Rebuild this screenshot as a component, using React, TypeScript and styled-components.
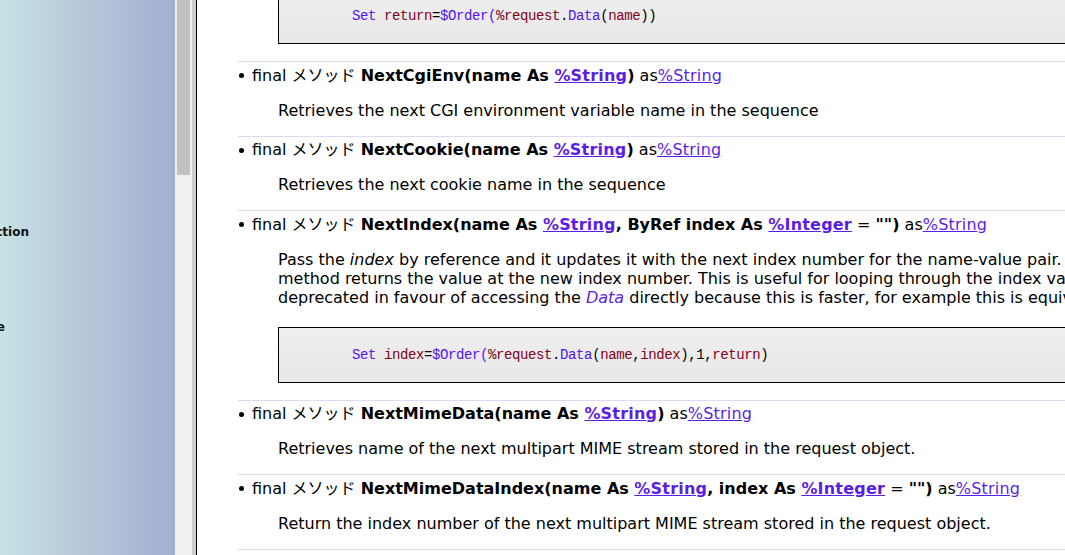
import React from 'react';
import styled, { createGlobalStyle } from 'styled-components';

const GlobalStyle = createGlobalStyle`
  html, body {
    margin: 0;
    padding: 0;
    background: #ffffff;
    overflow: hidden;
  }
  body {
    font-family: 'DejaVu Sans', 'Noto Sans CJK JP', sans-serif;
  }
`;

type Token = { t: string; k?: 'kw' | 'var' };

type Part =
  | { kind: 'text'; text: string }
  | { kind: 'bold'; text: string }
  | { kind: 'link'; text: string; bold?: boolean };

interface Method {
  parts: Part[];
  desc?: string;
}

const cgiEnv: Method = {
  parts: [
    { kind: 'bold', text: 'NextCgiEnv(name As ' },
    { kind: 'link', text: '%String', bold: true },
    { kind: 'bold', text: ')' },
    { kind: 'text', text: ' as' },
    { kind: 'link', text: '%String' },
  ],
  desc: 'Retrieves the next CGI environment variable name in the sequence',
};

const cookie: Method = {
  parts: [
    { kind: 'bold', text: 'NextCookie(name As ' },
    { kind: 'link', text: '%String', bold: true },
    { kind: 'bold', text: ')' },
    { kind: 'text', text: ' as' },
    { kind: 'link', text: '%String' },
  ],
  desc: 'Retrieves the next cookie name in the sequence',
};

const nextIndex: Method = {
  parts: [
    { kind: 'bold', text: 'NextIndex(name As ' },
    { kind: 'link', text: '%String', bold: true },
    { kind: 'bold', text: ', ByRef index As ' },
    { kind: 'link', text: '%Integer', bold: true },
    { kind: 'text', text: ' = ' },
    { kind: 'bold', text: '"")' },
    { kind: 'text', text: ' as' },
    { kind: 'link', text: '%String' },
  ],
};

const mimeData: Method = {
  parts: [
    { kind: 'bold', text: 'NextMimeData(name As ' },
    { kind: 'link', text: '%String', bold: true },
    { kind: 'bold', text: ')' },
    { kind: 'text', text: ' as' },
    { kind: 'link', text: '%String' },
  ],
  desc: 'Retrieves name of the next multipart MIME stream stored in the request object.',
};

const mimeDataIndex: Method = {
  parts: [
    { kind: 'bold', text: 'NextMimeDataIndex(name As ' },
    { kind: 'link', text: '%String', bold: true },
    { kind: 'bold', text: ', index As ' },
    { kind: 'link', text: '%Integer', bold: true },
    { kind: 'text', text: ' = ' },
    { kind: 'bold', text: '"")' },
    { kind: 'text', text: ' as' },
    { kind: 'link', text: '%String' },
  ],
  desc: 'Return the index number of the next multipart MIME stream stored in the request object.',
};

const code1: Token[] = [
  { t: 'Set', k: 'kw' },
  { t: ' ' },
  { t: 'return', k: 'var' },
  { t: '=' },
  { t: '$Order(', k: 'kw' },
  { t: '%request', k: 'var' },
  { t: '.' },
  { t: 'Data', k: 'kw' },
  { t: '(' },
  { t: 'name', k: 'var' },
  { t: '))' },
];

const code2: Token[] = [
  { t: 'Set', k: 'kw' },
  { t: ' ' },
  { t: 'index', k: 'var' },
  { t: '=' },
  { t: '$Order(', k: 'kw' },
  { t: '%request', k: 'var' },
  { t: '.' },
  { t: 'Data', k: 'kw' },
  { t: '(' },
  { t: 'name', k: 'var' },
  { t: ',' },
  { t: 'index', k: 'var' },
  { t: '),1,' },
  { t: 'return', k: 'var' },
  { t: ')' },
];

const CodeBlock: React.FC<{ tokens: Token[]; $first?: boolean }> = ({ tokens, $first }) => (
  <CodeBox $first={$first}>
    {tokens.map((tok, i) => (
      <CodeToken key={i} $kind={tok.k}>
        {tok.t}
      </CodeToken>
    ))}
  </CodeBox>
);

const MethodHeading: React.FC<{ method: Method }> = ({ method }) => (
  <Heading>
    <Bullet />
    <span>final メソッド </span>
    {method.parts.map((p, i) => {
      if (p.kind === 'link') {
        return (
          <TypeLink key={i} href="#" $bold={p.bold}>
            {p.text}
          </TypeLink>
        );
      }
      if (p.kind === 'bold') return <b key={i}>{p.text}</b>;
      return <span key={i}>{p.text}</span>;
    })}
  </Heading>
);

const MethodItem: React.FC<{ method: Method }> = ({ method }) => (
  <Item>
    <MethodHeading method={method} />
    {method.desc && <Desc>{method.desc}</Desc>}
  </Item>
);

const App: React.FC = () => {
  return (
    <>
      <GlobalStyle />
      <Frame>
        <NavPanel>
          <NavList>
            <NavItem $end={29} $gap={0}>
              Introduction
            </NavItem>
            <NavItem $end={5} $gap={81}>
              Reference
            </NavItem>
          </NavList>
        </NavPanel>
        <ScrollTrack>
          <ScrollThumb />
        </ScrollTrack>
        <FrameEdge />
        <Content>
          <CodeBlock tokens={code1} $first />
          <MethodItem method={cgiEnv} />
          <MethodItem method={cookie} />
          <Item>
            <MethodHeading method={nextIndex} />
            <Desc>
              Pass the <i>index</i> by reference and it updates it with the next index number for
              the name-value pair. The
              <br />
              method returns the value at the new index number. This is useful for looping through
              the index values. This method is
              <br />
              deprecated in favour of accessing the <DataRef>Data</DataRef> directly because this is
              faster, for example this is equivalent to:
            </Desc>
            <CodeBlock tokens={code2} />
          </Item>
          <MethodItem method={mimeData} />
          <MethodItem method={mimeDataIndex} />
          <Item />
        </Content>
      </Frame>
    </>
  );
};

export default App;

const Frame = styled.div`
  display: flex;
  width: 1065px;
  height: 555px;
  overflow: hidden;
`;

const NavPanel = styled.nav`
  flex: 0 0 175px;
  height: 100%;
  background: linear-gradient(to right, #c7e1e5 0%, #b4c4d8 55%, #a3afd1 100%);
  overflow: hidden;
`;

const NavList = styled.div`
  display: flex;
  flex-direction: column;
  padding-top: 225px;
`;

const NavItem = styled.div<{ $end: number; $gap: number }>`
  display: flex;
  justify-content: flex-end;
  width: ${(p) => p.$end}px;
  margin-top: ${(p) => p.$gap}px;
  white-space: nowrap;
  font-family: 'DejaVu Sans', sans-serif;
  font-weight: bold;
  font-size: 12px;
  line-height: 14px;
  color: #111111;
`;

const ScrollTrack = styled.div`
  flex: 0 0 17px;
  height: 100%;
  background: #f0f0f0;
  display: flex;
  justify-content: center;
`;

const ScrollThumb = styled.div`
  width: 13px;
  height: 175px;
  background: #c1c1c1;
`;

const FrameEdge = styled.div`
  flex: 0 0 4px;
  height: 100%;
  background: #cdcdcd;
  border-right: 1px solid #000000;
`;

const Content = styled.main`
  flex: 1 0 auto;
  min-width: 0;
  height: 100%;
  overflow: hidden;
  padding-left: 41px;
  font-family: 'DejaVu Sans', 'Noto Sans CJK JP', sans-serif;
  font-size: 16px;
  line-height: 19px;
  color: #000000;
`;

const Item = styled.section`
  width: 1400px;
  border-top: 1px solid #dedaf6;
  padding-top: 3.5px;
`;

const Heading = styled.div`
  display: flex;
  align-items: center;
  white-space: pre;
  height: 19px;

  b {
    font-weight: bold;
  }
`;

const Bullet = styled.span`
  flex: 0 0 5px;
  width: 5px;
  height: 5px;
  border-radius: 50%;
  background: #000000;
  margin: 1px 8px 0 1px;
`;

const TypeLink = styled.a<{ $bold?: boolean }>`
  color: #5a1ee6;
  text-decoration: underline;
  font-weight: ${(p) => (p.$bold ? 'bold' : 'normal')};
  letter-spacing: ${(p) => (p.$bold ? '0.2px' : '0.2px')};
`;

const Desc = styled.p`
  margin: 16px 0 16px 40px;
  white-space: nowrap;

  i {
    font-style: italic;
  }
`;

const DataRef = styled.i`
  color: #5a1ee6;
`;

const CodeBox = styled.pre<{ $first?: boolean }>`
  margin: ${(p) => (p.$first ? '-12px' : '20px')} 0 17px 40px;
  width: 1200px;
  border: 1px solid #000000;
  background: linear-gradient(#efefef, #e8e8e8);
  padding: 19px 0 19px 73px;
  font-family: 'Liberation Mono', monospace;
  font-size: 14px;
  letter-spacing: -0.4px;
  line-height: 16px;
  color: #000000;
`;

const CodeToken = styled.span<{ $kind?: 'kw' | 'var' }>`
  color: ${(p) => (p.$kind === 'kw' ? '#5014f5' : p.$kind === 'var' ? '#800020' : '#000000')};
`;
